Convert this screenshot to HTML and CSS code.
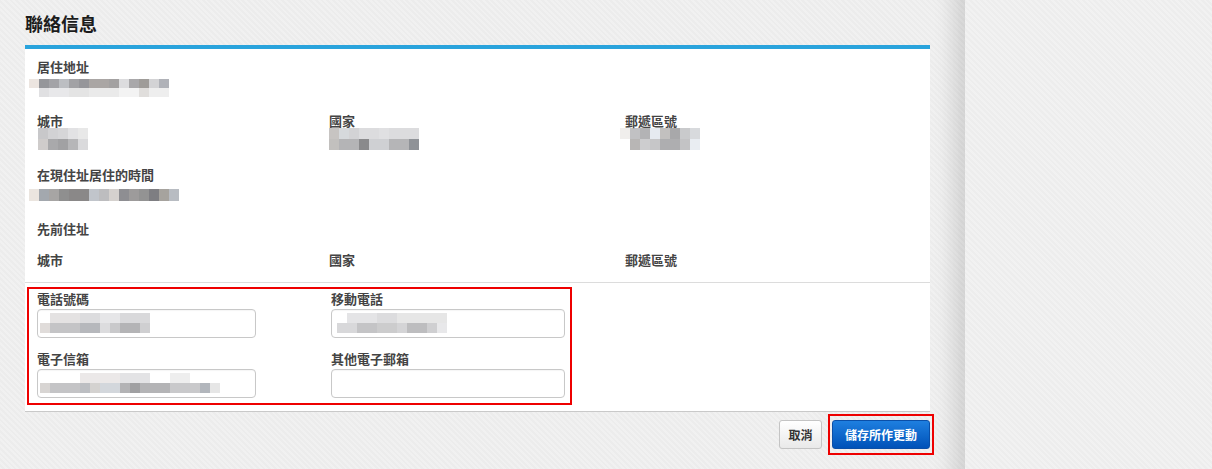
FILE: index.html
```html
<!DOCTYPE html>
<html lang="zh-Hant">
<head>
    <meta charset="UTF-8">
    <meta name="viewport" content="width=device-width, initial-scale=1.0">
    <title>聯絡信息</title>
    <link rel="stylesheet" href="styles.css">
</head>
<body>
    <div class="page">
        <main class="content">
            <h2 class="title">聯絡信息</h2>
            <section class="panel">
                <!-- 주소 정보 -->
                <div class="info">
                    <div class="row">
                        <div class="field">
                            <label>居住地址</label>
                            <div class="value"><span class="blur b-addr"></span></div>
                        </div>
                    </div>
                    <div class="row">
                        <div class="field">
                            <label>城市</label>
                            <div class="value"><span class="blur b-city"></span></div>
                        </div>
                        <div class="field">
                            <label>國家</label>
                            <div class="value"><span class="blur b-country"></span></div>
                        </div>
                        <div class="field">
                            <label>郵遞區號</label>
                            <div class="value"><span class="blur b-zip"></span></div>
                        </div>
                    </div>
                    <div class="row">
                        <div class="field">
                            <label>在現住址居住的時間</label>
                            <div class="value"><span class="blur b-time"></span></div>
                        </div>
                    </div>
                    <div class="row row-short">
                        <div class="field">
                            <label>先前住址</label>
                        </div>
                    </div>
                    <div class="row row-last">
                        <div class="field"><label>城市</label></div>
                        <div class="field"><label>國家</label></div>
                        <div class="field"><label>郵遞區號</label></div>
                    </div>
                </div>
                <!-- 연락처 입력 -->
                <div class="contact">
                    <div class="mark">
                        <div class="form-grid">
                            <div class="form-field">
                                <label>電話號碼</label>
                                <div class="input"><span class="blur b-phone"></span></div>
                            </div>
                            <div class="form-field wide">
                                <label>移動電話</label>
                                <div class="input"><span class="blur b-mobile"></span></div>
                            </div>
                            <div class="form-field">
                                <label>電子信箱</label>
                                <div class="input"><span class="blur b-email"></span></div>
                            </div>
                            <div class="form-field wide">
                                <label>其他電子郵箱</label>
                                <div class="input"></div>
                            </div>
                        </div>
                    </div>
                </div>
            </section>
            <div class="actions">
                <button class="btn btn-cancel">取消</button>
                <span class="mark-btn"><button class="btn btn-save">儲存所作更動</button></span>
            </div>
        </main>
        <aside class="side"></aside>
    </div>
</body>
</html>
```
FILE: styles.css
```css
*{box-sizing: border-box;}
body{
    margin: 0;
    font-family: "Liberation Sans", "Noto Sans CJK TC", sans-serif;
    background-color: #ececec;
}
.page{
    display: flex;
    height: 469px;
    overflow: hidden;
}

/* 왼쪽 본문 */
.content{
    width: 965px;
    padding: 14px 35px 0 25px;
    background-color: #ececec;
    background-image: repeating-linear-gradient(45deg, rgba(255,255,255,.25) 0 2px, rgba(0,0,0,0) 2px 4px);
    box-shadow: inset -30px 0 20px -18px rgba(0,0,0,.12);
}
.title{
    margin: 0 0 9px;
    font-size: 18px;
    line-height: 22px;
    font-weight: bold;
    color: #1c1c1c;
}
.panel{
    background: #fff;
    border-top: 4px solid #29a3dc;
    border-bottom: 1px solid #c9c9c9;
}
.info{
    padding: 11px 12px 13px;
}
.row{
    display: grid;
    grid-template-columns: 292px 296px 1fr;
    margin-bottom: 18px;
}
.row-short{margin-bottom: 15px;}
.row-last{margin-bottom: 0;}
label{
    display: block;
    font-size: 13px;
    line-height: 16px;
    font-weight: bold;
    color: #444;
}
.value{
    display: flow-root;
    height: 20px;
}

/* 모자이크 처리된 값 */
.blur{
    display: block;
    background-repeat: no-repeat;
    background-size: 100% 50%, 100% 50%;
    background-position: 0 0, 0 100%;
}
.b-addr{
    width: 140px; height: 18px; margin: 3px 0 0 -8px;
    background-image:
        linear-gradient(to right, #ece5e0 0 10px, #95969a 10px 20px, #a3a3a7 20px 30px, #bcbec2 30px 40px, #a2a2a5 40px 50px, #96969a 50px 60px, #aaa6a4 60px 80px, #a3a1a1 80px 90px, #dcdcde 90px 100px, #a9a8aa 100px 110px, #9f9c99 110px 120px, #d3d3d5 120px 130px, #b0b2b8 130px 140px),
        linear-gradient(to right, #fff 0 10px, #e0e0e2 10px 20px, #e8e8ea 20px 40px, #e4e4e4 40px 60px, #eaeaea 60px 90px, #f3f3f3 90px 110px, #e0dedc 110px 120px, #eeeeee 120px 140px);
}
.b-city{
    width: 50px; height: 22px; margin: -2px 0 0 1px;
    background-image:
        linear-gradient(to right, #c8c8ca 0 10px, #d2d2d4 10px 20px, #d6d6d8 20px 30px, #e2e2e4 30px 40px, #e8e8e8 40px 50px),
        linear-gradient(to right, #cfcccb 0 10px, #a9a9ab 10px 20px, #a1a1a3 20px 30px, #b6b6b8 30px 40px, #dadadc 40px 50px);
}
.b-country{
    width: 90px; height: 22px; margin: -2px 0 0 0;
    background-image:
        linear-gradient(to right, #c7c4c2 0 10px, #d6d9dc 10px 20px, #d3d3d5 20px 30px, #dcdcde 30px 50px, #e0e0e2 50px 60px, #dcdcde 60px 90px),
        linear-gradient(to right, #c2c0be 0 10px, #b4b4b6 10px 30px, #8a8a8c 30px 40px, #cfd0d3 40px 60px, #b5b5b7 60px 80px, #8f9297 80px 90px);
}
.b-zip{
    width: 80px; height: 22px; margin: -2px 0 0 -5px;
    background-image:
        linear-gradient(to right, #f0eeec 0 10px, #c1c1c3 10px 20px, #b3b3b5 20px 30px, #e6eaf0 30px 40px, #c2c0bf 40px 50px, #a8a8aa 50px 60px, #c9cacc 60px 70px, #d8dadd 70px 80px),
        linear-gradient(to right, #fff 0 10px, #b8b6b5 10px 20px, #cdcdcf 20px 30px, #c6c6c8 30px 40px, #aeaeb0 40px 60px, #c3c3c5 60px 70px, #e9edf2 70px 80px);
}
.b-time{
    width: 150px; height: 12px; margin: 5px 0 0 -8px;
    background-size: 100% 100%;
    background-image:
        linear-gradient(to right, #ebe5df 0 10px, #a3a8ae 10px 20px, #a7a5a4 20px 30px, #8f8f8f 30px 40px, #8a8888 40px 60px, #c1c5cb 60px 70px, #bdbdbf 70px 80px, #d5d1ce 80px 90px, #8e8e92 90px 100px, #9d9b9b 100px 110px, #939393 110px 120px, #7e7e82 120px 130px, #a6a39e 130px 140px, #b8bcc2 140px 150px);
}
.b-phone{
    width: 120px; height: 20px; margin: 3px 0 0 2px;
    background-image:
        linear-gradient(to right, #fff 0 10px, #e4e2e2 10px 40px, #dcdcde 40px 60px, #e6e6e8 60px 80px, #d9d9db 80px 110px, #fff 110px 120px),
        linear-gradient(to right, #e0dcda 0 10px, #c4c4c6 10px 40px, #b6b8bc 40px 60px, #dcdcde 60px 70px, #c9c9cb 70px 80px, #b4b4b6 80px 100px, #cfcfd1 100px 110px, #fff 110px 120px);
}
.b-mobile{
    width: 110px; height: 20px; margin: 3px 0 0 5px;
    background-image:
        linear-gradient(to right, #fff 0 10px, #e4e4e6 10px 40px, #dcdcde 40px 60px, #e6e6e6 60px 110px),
        linear-gradient(to right, #d8d8da 0 20px, #c4c4c6 20px 40px, #cccccd 40px 60px, #d4d4d6 60px 70px, #bdbdbf 70px 90px, #cfcfd1 90px 100px, #e8e8ea 100px 110px);
}
.b-email{
    width: 180px; height: 20px; margin: 3px 0 0 2px;
    background-image:
        linear-gradient(to right, #fff 0 40px, #ebe8e8 40px 80px, #e3e3e5 80px 110px, #fff 110px 130px, #eeeeee 130px 150px, #fff 150px 180px),
        linear-gradient(to right, #d8d5d3 0 10px, #c4c4c6 10px 40px, #bcbec2 40px 50px, #d4d2d0 50px 60px, #d3d7dc 60px 80px, #b3b3b5 80px 90px, #a0a0a2 90px 100px, #b4b4b6 100px 130px, #c9c9cb 130px 160px, #b2b6bc 160px 170px, #e6e6e6 170px 180px);
}

/* 연락처 입력 영역 */
.contact{
    border-top: 1px solid #dcdcdc;
    padding: 4px 0 6px 2px;
}
.mark{
    width: 545px;
    border: 2px solid #ee0000;
    padding: 3px 0 5px 8px;
}
.form-grid{
    display: grid;
    grid-template-columns: 219px 234px;
    column-gap: 75px;
    row-gap: 14px;
}
.form-field label{margin-bottom: 1px;}
.input{
    height: 29px;
    border: 1px solid #c8c8c8;
    border-radius: 4px;
    background: #fff;
    box-shadow: inset 0 1px 1px rgba(0,0,0,.04);
    overflow: hidden;
}

/* 하단 버튼 */
.actions{
    display: flex;
    justify-content: flex-end;
    align-items: center;
    gap: 6px;
    padding-top: 2px;
}
.btn{
    height: 29px;
    border-radius: 3px;
    font-family: "Liberation Sans", "Noto Sans CJK TC", sans-serif;
    font-size: 12px;
    font-weight: bold;
    cursor: pointer;
}
.btn-cancel{
    width: 43px;
    padding: 0;
    color: #333;
    border: 1px solid #c4c4c4;
    background: linear-gradient(#ffffff, #e9e9e9);
}
.mark-btn{
    display: block;
    border: 2px solid #ee0000;
    padding: 4px 2px 4px 2px;
    margin-right: -4px;
}
.btn-save{
    display: block;
    width: 98px;
    padding: 0;
    color: #fff;
    border: 1px solid #0a4fa8;
    background: linear-gradient(#1e7fe0, #0052b8);
}

/* 오른쪽 영역 */
.side{
    flex: 1;
    background-color: #ededed;
    background-image: repeating-linear-gradient(45deg, rgba(255,255,255,.25) 0 2px, rgba(0,0,0,0) 2px 4px);
}
```
